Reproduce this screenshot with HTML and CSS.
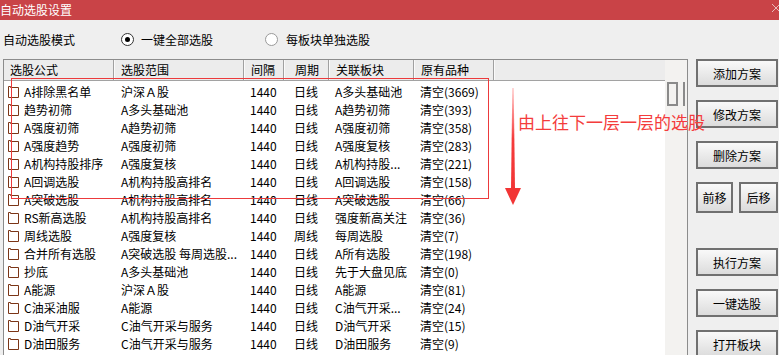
FILE: index.html
```html
<!DOCTYPE html>
<html lang="zh-CN">
<head>
  <meta charset="UTF-8" />
  <title>自动选股设置</title>
  <link rel="stylesheet" href="styles.css">
</head>
<body>
  <div class="window">
    <div class="titlebar">
      <span class="title">自动选股设置</span>
      <svg class="close" width="10" height="10" viewBox="0 0 10 10">
        <path d="M1 1 L9 9 M9 1 L1 9" stroke="#e9b9b9" stroke-width="1" />
      </svg>
    </div>

    <div class="mode-row">
      <span class="mode-label">自动选股模式</span>
      <label class="radio checked"><span class="dot"></span>一键全部选股</label>
      <label class="radio second"><span class="dot"></span>每板块单独选股</label>
    </div>

    <div class="main">
      <div class="list">
        <div class="grid">
          <div class="row head">
            <div class="c1">选股公式</div>
            <div class="c2">选股范围</div>
            <div class="c3">间隔</div>
            <div class="c4">周期</div>
            <div class="c5">关联板块</div>
            <div class="c6">原有品种</div>
            <div class="c7"></div>
          </div>
          <div id="rows"></div>
        </div>
        <div class="vscroll">
          <span class="thumb"></span>
          <span class="thumb edge"></span>
        </div>
      </div>

      <div class="actions">
        <button class="btn">添加方案</button>
        <button class="btn">修改方案</button>
        <button class="btn">删除方案</button>
        <div class="pair">
          <button class="btn small">前移</button>
          <button class="btn small">后移</button>
        </div>
        <button class="btn run">执行方案</button>
        <button class="btn">一键选股</button>
        <button class="btn">打开板块</button>
      </div>
    </div>

    <!-- annotation drawn over the dialog -->
    <div class="mark-box"></div>
    <svg class="mark-arrow" width="20" height="122" viewBox="0 0 20 122">
      <defs>
        <linearGradient id="shaft" x1="0" y1="0" x2="0" y2="1">
          <stop offset="0" stop-color="#ff5a5a" stop-opacity="0.35" />
          <stop offset="0.5" stop-color="#f53b3b" />
          <stop offset="1" stop-color="#f23535" />
        </linearGradient>
      </defs>
      <polygon points="9.3,2 10.7,2 12,103 8,103" fill="url(#shaft)" />
      <polygon points="2,102 18,102 10,119" fill="#f23535" />
    </svg>
    <div class="mark-note">由上往下一层一层的选股</div>
  </div>

  <script>
    const rows = [
      ['A排除黑名单', '沪深Ａ股', '1440', '日线', 'A多头基础池', '清空(3669)'],
      ['趋势初筛', 'A多头基础池', '1440', '日线', 'A趋势初筛', '清空(393)'],
      ['A强度初筛', 'A趋势初筛', '1440', '日线', 'A强度初筛', '清空(358)'],
      ['A强度趋势', 'A强度初筛', '1440', '日线', 'A强度复核', '清空(283)'],
      ['A机构持股排序', 'A强度复核', '1440', '日线', 'A机构持股...', '清空(221)'],
      ['A回调选股', 'A机构持股高排名', '1440', '日线', 'A回调选股', '清空(158)'],
      ['A突破选股', 'A机构持股高排名', '1440', '日线', 'A突破选股', '清空(66)'],
      ['RS新高选股', 'A机构持股高排名', '1440', '日线', '强度新高关注', '清空(36)'],
      ['周线选股', 'A强度复核', '1440', '周线', '每周选股', '清空(7)'],
      ['合并所有选股', 'A突破选股 每周选股...', '1440', '日线', 'A所有选股', '清空(198)'],
      ['抄底', 'A多头基础池', '1440', '日线', '先于大盘见底', '清空(0)'],
      ['A能源', '沪深Ａ股', '1440', '日线', 'A能源', '清空(81)'],
      ['C油采油服', 'A能源', '1440', '日线', 'C油气开采...', '清空(24)'],
      ['D油气开采', 'C油气开采与服务', '1440', '日线', 'D油气开采', '清空(15)'],
      ['D油田服务', 'C油气开采与服务', '1440', '日线', 'D油田服务', '清空(9)']
    ];

    const box = '<svg class="check" width="11" height="12" viewBox="0 0 11 12">' +
      '<path d="M0.5 11.5 V0.5 H2.5 V1.5 H10.5 V11.5 Z" fill="#fff" stroke="#7b3516" stroke-width="1" /></svg>';

    const holder = document.getElementById('rows');
    rows.forEach(r => {
      const div = document.createElement('div');
      div.className = 'row item';
      div.innerHTML =
        `<div class="c1">${box}<span>${r[0]}</span></div>` +
        `<div class="c2">${r[1]}</div>` +
        `<div class="c3">${r[2]}</div>` +
        `<div class="c4">${r[3]}</div>` +
        `<div class="c5">${r[4]}</div>` +
        `<div class="c6">${r[5]}</div>` +
        `<div class="c7"></div>`;
      holder.appendChild(div);
    });
  </script>
</body>
</html>
```

FILE: styles.css
```css
body { margin: 0; background: #efefef; font-family: "Noto Sans CJK SC", "Noto Sans", sans-serif; font-size: 12px; color: #000; }
.window { position: relative; width: 779px; height: 355px; overflow: hidden; background: #efefef; }

.titlebar { height: 20px; background: #c94347; color: #fff; display: flex; align-items: center; justify-content: space-between; }
.title { line-height: 20px; margin-top: -1px; }
.close { margin-right: -2px; margin-top: -4px; }

.mode-row { height: 39px; display: flex; align-items: center; padding-left: 3px; }
.mode-label { width: 118px; }
.radio { display: flex; align-items: center; }
.radio .dot { width: 11px; height: 11px; border: 1px solid #333; border-radius: 50%; background: #fff; margin-right: 7px; display: inline-flex; align-items: center; justify-content: center; }
.radio.checked .dot::after { content: ""; width: 5px; height: 5px; border-radius: 50%; background: #000; }
.radio.second { margin-left: 52px; }
.radio.second .dot { border-color: #9a9a9a; margin-right: 8px; }

.main { display: flex; align-items: flex-start; }
.list { margin-left: 3px; width: 683px; height: 320px; border: 1px solid #8c8c8c; border-bottom: none; background: #fff; display: flex; }
.grid { width: 661px; }
.row { display: grid; grid-template-columns: 110px 130px 40px 45px 85px 80px 1fr; }
.row > div { box-sizing: border-box; white-space: nowrap; overflow: hidden; padding-left: 6px; }
.row .c4 { padding-left: 10px; }

.head { height: 21px; background: #ececec; border-bottom: 1px solid #a2a2a2; box-sizing: border-box; margin-bottom: 2px; }
.head > div { line-height: 20px; border-right: 1px solid #a0a0a0; border-left: 1px solid #fafafa; }
.head .c1 { border-left: none; }
.head .c7 { border-right: none; }

.item { height: 18px; line-height: 18px; }
.item .c1 { padding-left: 4px; display: flex; align-items: center; }
.item .c1 .check { flex: none; margin-right: 5px; }
.item .c2 { padding-left: 7px; }

.vscroll { width: 22px; background: #f3f2f0; display: flex; align-items: flex-start; padding-top: 22px; box-sizing: border-box; }
.thumb { width: 7px; height: 20px; border: 2px solid #8a8a8a; margin-left: 2px; }
.thumb.edge { width: 0; border-right: none; margin-left: 5px; }

.actions { margin-left: 8px; width: 82px; display: flex; flex-direction: column; gap: 13px; }
.btn { font-family: inherit; font-size: 12px; color: #000; height: 28px; border: 2px solid #707070; background: linear-gradient(#f9f9f9, #dcdcdc); padding: 0; cursor: pointer; }
.pair { display: flex; gap: 6px; }
.btn.small { width: 38px; height: 31px; }
.btn.small + .btn.small { width: 40px; }
.btn.run { margin-top: 22px; }

.mark-box { position: absolute; left: 11px; top: 78px; width: 476px; height: 119px; border: 1px solid #ec3a3c; }
.mark-arrow { position: absolute; left: 503px; top: 86px; }
.mark-note { position: absolute; left: 518px; top: 110px; font-size: 17px; color: #f43c3c; line-height: 24px; white-space: nowrap; }
```
